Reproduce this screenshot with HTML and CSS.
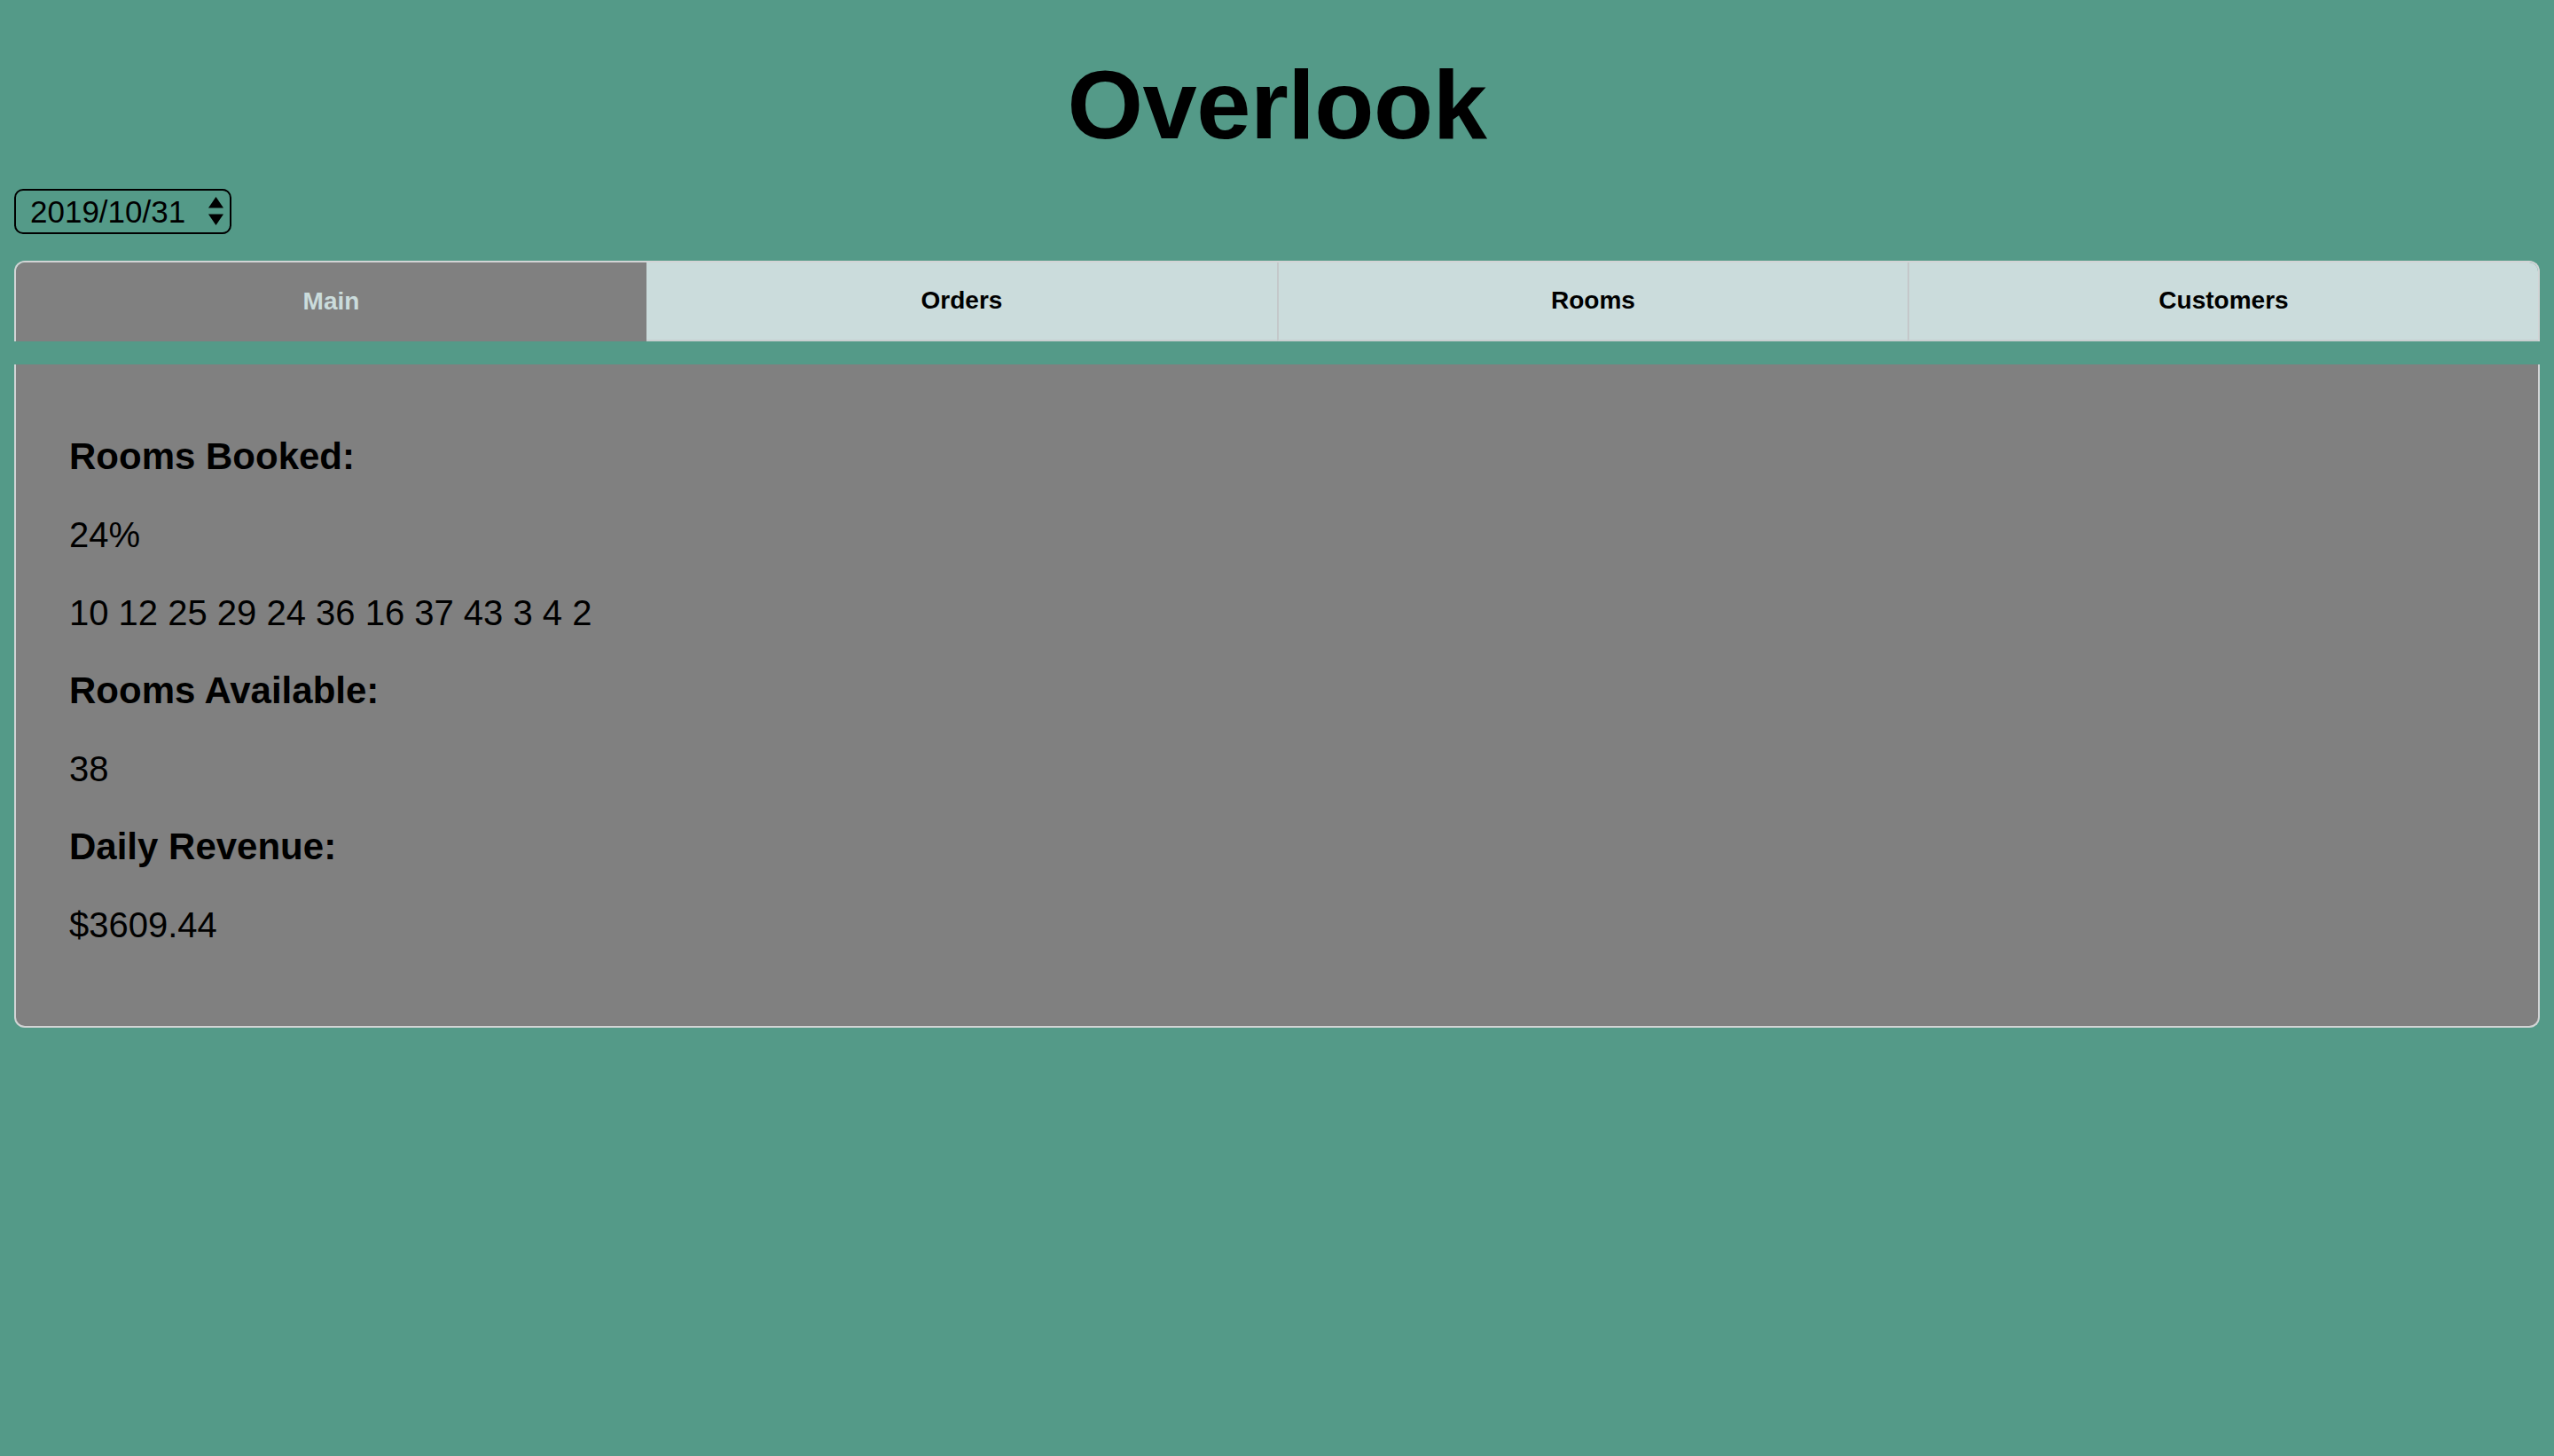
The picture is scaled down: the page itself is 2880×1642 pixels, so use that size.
FILE: index.html
```html
<!DOCTYPE html>
<html lang="en">
<head>
<meta charset="utf-8">
<title>Overlook</title>
<link rel="stylesheet" href="styles.css">
</head>
<body>
  <header class="page-header">
    <h1 class="title">Overlook</h1>
  </header>
  <div class="date-select">
    <span class="date-value">2019/10/31</span>
    <svg class="date-arrows" width="17" height="32" viewBox="0 0 17 32" aria-hidden="true">
      <polygon points="8.5,0 17,12.5 0,12.5" fill="#000"/>
      <polygon points="0,19.5 17,19.5 8.5,32" fill="#000"/>
    </svg>
  </div>
  <nav class="tabs">
    <div class="tab tab-active">Main</div>
    <div class="tab">Orders</div>
    <div class="tab tab-divided">Rooms</div>
    <div class="tab tab-divided">Customers</div>
  </nav>
  <main class="panel">
    <div class="row row-heading">Rooms Booked:</div>
    <div class="row">24%</div>
    <div class="row">10 12 25 29 24 36 16 37 43 3 4 2</div>
    <div class="row row-heading">Rooms Available:</div>
    <div class="row">38</div>
    <div class="row row-heading">Daily Revenue:</div>
    <div class="row">$3609.44</div>
  </main>
</body>
</html>
```
FILE: styles.css
```css
html, body {
  margin: 0;
  background: #549a88;
}

body {
  padding: 0 16px;
  font-family: "Liberation Sans", Arial, sans-serif;
  color: #000;
}

.page-header {
  display: flex;
  justify-content: center;
}

.title {
  margin: 55px 0 0;
  font-size: 110px;
  line-height: 1.15;
  font-weight: 700;
  letter-spacing: -0.5px;
}

.date-select {
  box-sizing: border-box;
  margin-top: 31px;
  width: 245px;
  height: 51px;
  border: 2px solid #000;
  border-radius: 10px;
  display: flex;
  align-items: center;
  justify-content: space-between;
  padding: 0 7px 0 16px;
  font-size: 35px;
}

.date-value {
  line-height: 1;
}

.date-arrows {
  display: block;
}

.tabs {
  margin-top: 30px;
  display: grid;
  grid-template-columns: repeat(4, 1fr);
  border: 2px solid #d2d4d5;
  border-bottom: 0;
  border-radius: 12px 12px 0 0;
  overflow: hidden;
}

.tab {
  box-sizing: border-box;
  height: 89px;
  display: flex;
  align-items: center;
  justify-content: center;
  background: #cbdcdc;
  border-bottom: 2px solid #c9cfd0;
  font-size: 28px;
  font-weight: 700;
  color: #000;
}

.tab-active {
  background: #808080;
  color: #cbdcdc;
  border-bottom: 0;
}

.tab-divided {
  border-left: 2px solid #c4c8ca;
}

.panel {
  display: block;
  margin-top: 26px;
  background: #808080;
  border: 2px solid #d2d4d5;
  border-top: 0;
  border-radius: 0 0 12px 12px;
  padding: 60px 58px 70px 60px;
}

.row {
  line-height: 88px;
  font-size: 40px;
  white-space: nowrap;
}

.row-heading {
  font-size: 42px;
  font-weight: 700;
}
```
